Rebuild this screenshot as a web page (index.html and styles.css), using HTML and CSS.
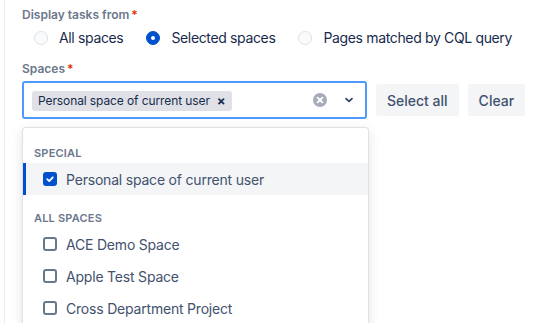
FILE: index.html
```html
<!DOCTYPE html>
<html lang="en">
<head>
  <meta charset="UTF-8" />
  <title>Task report settings</title>
  <link rel="stylesheet" href="styles.css">
</head>
<body>
  <div class="panel">

    <div class="field">
      <div class="label">Display tasks from<span class="req">*</span></div>
      <div class="radios">
        <label class="radio"><span class="dot"></span>All spaces</label>
        <label class="radio on"><span class="dot"></span>Selected spaces</label>
        <label class="radio"><span class="dot"></span>Pages matched by CQL query</label>
      </div>
    </div>

    <div class="field">
      <div class="label">Spaces<span class="req">*</span></div>
      <div class="select-row">
        <div class="select">
          <div class="tags">
            <span class="tag">Personal space of current user <span class="tag-x">&times;</span></span>
          </div>
          <div class="icons">
            <svg class="clear-ico" width="16" height="16" viewBox="0 0 16 16">
              <circle cx="8" cy="8" r="7" fill="#a5adba" />
              <path d="M5.6 5.6l4.8 4.8M10.4 5.6l-4.8 4.8" stroke="#fff" stroke-width="1.8" stroke-linecap="round" />
            </svg>
            <svg class="chev" width="12" height="12" viewBox="0 0 12 12">
              <path d="M3 4.6l3 2.8 3-2.8" fill="none" stroke="#344563" stroke-width="1.8" stroke-linecap="round" stroke-linejoin="round" />
            </svg>
          </div>
        </div>
        <button class="btn">Select all</button>
        <button class="btn">Clear</button>
      </div>

      <div class="menu">
        <div class="group">Special</div>
        <div class="option selected"><span class="box checked">
          <svg width="10" height="10" viewBox="0 0 10 10"><path d="M2.2 5.2l2 1.9 3.6-3.8" fill="none" stroke="#fff" stroke-width="1.8" stroke-linecap="round" stroke-linejoin="round" /></svg>
        </span>Personal space of current user</div>
        <div class="group">All spaces</div>
        <div class="option"><span class="box"></span>ACE Demo Space</div>
        <div class="option"><span class="box"></span>Apple Test Space</div>
        <div class="option"><span class="box"></span>Cross Department Project</div>
      </div>
    </div>

  </div>
</body>
</html>
```

FILE: styles.css
```css
:root {
  --tekst: #172b4d;
  --tekst-graa: #6b778c;
  --blaa: #0052cc;
  --lys: #f4f5f7;
}

html, body {
  height: 323px;
  overflow: hidden;
}

body {
  margin: 0;
  font-family: Inter, "Noto Sans", Arial, sans-serif;
  color: var(--tekst);
  background: #fff;
  white-space: nowrap;
}

.panel {
  margin-left: 4px;
  border-left: 1px solid #ebecf0;
  padding: 7px 0 0 17px;
  height: 323px;
  box-sizing: border-box;
}

.label {
  font-size: 12px;
  font-weight: 600;
  color: var(--tekst-graa);
  line-height: 16px;
  margin-bottom: 5px;
}

.field + .field .label {
  margin-bottom: 4px;
}

.req {
  color: #de350b;
  margin-left: 2px;
}

.radios {
  display: flex;
  padding-left: 12px;
  margin-bottom: 13px;
}

.radio {
  display: flex;
  align-items: center;
  flex-shrink: 0;
  font-size: 14px;
  line-height: 20px;
  letter-spacing: -0.35px;
  margin-right: 23px;
}

.dot {
  width: 12px;
  height: 12px;
  border: 1px solid #dfe1e6;
  border-radius: 50%;
  background: #fafbfc;
  margin-right: 11px;
  position: relative;
  flex-shrink: 0;
}

.radio.on .dot {
  background: var(--blaa);
  border-color: var(--blaa);
}

.radio.on .dot::after {
  content: "";
  position: absolute;
  left: 4px;
  top: 4px;
  width: 4px;
  height: 4px;
  border-radius: 50%;
  background: #fff;
}

.select-row {
  display: flex;
  align-items: center;
  gap: 9px;
}

.select {
  width: 345px;
  height: 38px;
  flex-shrink: 0;
  box-sizing: border-box;
  border: 2px solid #4c9aff;
  border-radius: 3px;
  display: flex;
  align-items: center;
  padding: 0 8px;
}

.tags {
  flex: 1;
}

.tag {
  display: inline-flex;
  align-items: center;
  background: #dfe1e6;
  border-radius: 3px;
  font-size: 12px;
  line-height: 20px;
  letter-spacing: -0.1px;
  padding: 0 6px 0 6px;
  color: var(--tekst);
}

.tag-x {
  font-size: 13px;
  font-weight: 700;
  margin-left: 7px;
}

.icons {
  display: flex;
  align-items: center;
  gap: 15px;
  padding-right: 2px;
}

.btn {
  font-family: inherit;
  font-size: 14px;
  font-weight: 500;
  color: #42526e;
  background: var(--lys);
  border: none;
  border-radius: 3px;
  height: 32px;
  padding: 0 11px;
  flex-shrink: 0;
  white-space: nowrap;
}

.menu {
  margin-top: 8px;
  width: 347px;
  box-sizing: border-box;
  border: 1px solid #dfe1e6;
  border-bottom: none;
  border-radius: 4px 4px 0 0;
  box-shadow: 0 4px 12px rgba(9, 30, 66, 0.12);
  padding-top: 17px;
  height: 200px;
}

.group {
  font-size: 11px;
  font-weight: 600;
  text-transform: uppercase;
  color: var(--tekst-graa);
  letter-spacing: 0.2px;
  padding-left: 11px;
  line-height: 16px;
  margin-bottom: 2px;
}

.option {
  display: flex;
  align-items: center;
  height: 32px;
  font-size: 14px;
  letter-spacing: -0.2px;
  color: #42526e;
  padding-left: 17px;
  border-left: 3px solid transparent;
}

.option.selected {
  background: var(--lys);
  border-left-color: var(--blaa);
  margin-bottom: 15px;
}

.box {
  width: 10px;
  height: 10px;
  border: 2px solid #6b778c;
  border-radius: 3px;
  margin-right: 9px;
  display: flex;
  align-items: center;
  justify-content: center;
  flex-shrink: 0;
}

.box.checked {
  background: var(--blaa);
  border-color: var(--blaa);
}
```
